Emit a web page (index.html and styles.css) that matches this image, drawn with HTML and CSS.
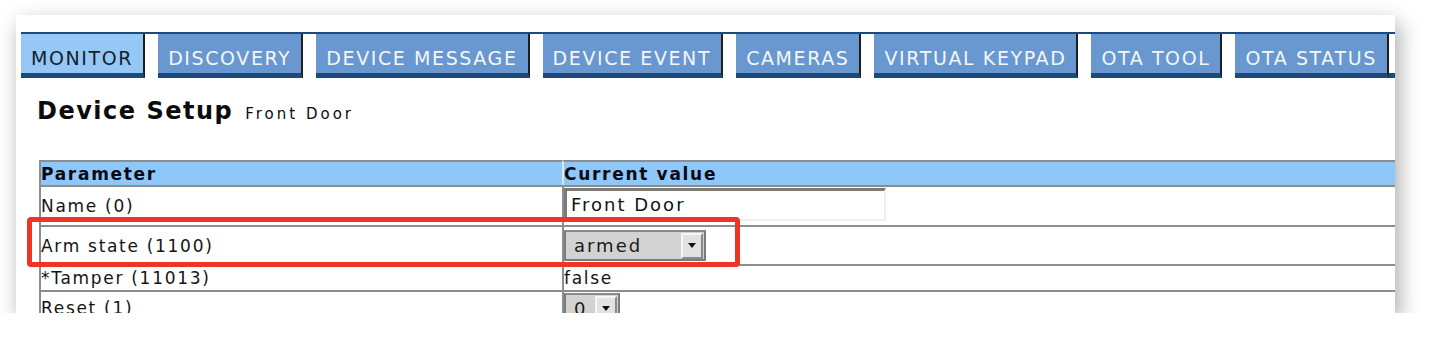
FILE: index.html
```html
<!DOCTYPE html>
<html>
<head>
<meta charset="utf-8">
<title>Device Setup</title>
<link rel="stylesheet" href="styles.css">
</head>
<body>
<div class="card">
  <div class="tabs">
    <div class="tab active">MONITOR</div>
    <div class="tab">DISCOVERY</div>
    <div class="tab">DEVICE MESSAGE</div>
    <div class="tab">DEVICE EVENT</div>
    <div class="tab">CAMERAS</div>
    <div class="tab">VIRTUAL KEYPAD</div>
    <div class="tab">OTA TOOL</div>
    <div class="tab">OTA STATUS</div>
    <div class="tab-fill"></div>
  </div>
  <h1 class="title">Device Setup<span class="sub">Front Door</span></h1>
  <table class="params">
    <colgroup><col class="c1"><col class="c2"></colgroup>
    <tr class="head">
      <th>Parameter</th>
      <th class="second">Current value</th>
    </tr>
    <tr class="r-name">
      <td>Name (0)</td>
      <td class="top"><span class="textbox">Front Door</span></td>
    </tr>
    <tr class="r-arm">
      <td>Arm state (1100)</td>
      <td><span class="select wide"><span class="sel-text">armed</span><span class="sel-btn"><span class="tri"></span></span></span></td>
    </tr>
    <tr class="r-small">
      <td>*Tamper (11013)</td>
      <td>false</td>
    </tr>
    <tr class="r-small">
      <td>Reset (1)</td>
      <td class="top"><span class="select narrow"><span class="sel-text">0</span><span class="sel-btn"><span class="tri"></span></span></span></td>
    </tr>
  </table>
  <div class="highlight"></div>
</div>
</body>
</html>
```

FILE: styles.css
```css
html, body {
  margin: 0;
  padding: 0;
  background: #ffffff;
}

body {
  font-family: "DejaVu Sans", Verdana, sans-serif;
  color: #111111;
}

.card {
  position: relative;
  box-sizing: border-box;
  width: 1379px;
  height: 298px;
  margin: 15px 0 0 16px;
  padding: 17px 0 0 5px;
  background: #ffffff;
  overflow: hidden;
  box-shadow: 4px 8px 20px rgba(0, 0, 0, 0.34);
}

/* Tabs */
.tabs {
  display: flex;
  gap: 13px;
  border-top: 2px solid #1b4b7e;
}

.tab {
  flex: none;
  box-sizing: border-box;
  height: 44px;
  padding: 13px 10px 0 10px;
  border-right: 2px solid #1e1e1e;
  border-bottom: 5px solid #1b4a7e;
  background: #6898cf;
  color: #f4f6f8;
  font-size: 19px;
  line-height: 22px;
  letter-spacing: 1.6px;
  white-space: nowrap;
}

.tab.active {
  background: #95c8f5;
  color: #15202c;
}

.tab-fill {
  flex: 1;
  margin-left: -13px;
  height: 44px;
  box-sizing: border-box;
  border-bottom: 5px solid #1b4a7e;
}

/* Title */
.title {
  margin: 19px 0 0 16px;
  font-size: 24px;
  font-weight: bold;
  line-height: 28px;
  letter-spacing: 1.5px;
  color: #0c0c0c;
}

.sub {
  margin-left: 12px;
  font-size: 15px;
  font-weight: normal;
  letter-spacing: 3px;
}

/* Table */
.params {
  margin: 32px 0 0 18px;
  width: 1400px;
  table-layout: fixed;
  border-collapse: separate;
  border-spacing: 0;
  font-size: 17px;
  letter-spacing: 1.7px;
}

.params col.c1 {
  width: 523px;
}

.params th,
.params td {
  box-sizing: border-box;
  padding: 0;
  border-top: 2px solid #8d8d8d;
  border-left: 2px solid #8d8d8d;
  text-align: left;
  vertical-align: middle;
  white-space: nowrap;
  color: #141414;
}

.params th {
  background: #8ec7f8;
  font-weight: bold;
  height: 25px;
  color: #0a0a14;
}

.params th.second {
  border-left-color: #dfe6ec;
}

.r-name td {
  height: 40px;
}

.r-arm td {
  height: 39px;
}

.r-small td {
  height: 26px;
}

.params td.top {
  vertical-align: top;
  padding-top: 1px;
}

/* Controls */
.textbox {
  display: inline-block;
  box-sizing: border-box;
  width: 322px;
  height: 33px;
  padding: 2px 0 0 4px;
  border-top: 3px solid #7a7a7a;
  border-left: 3px solid #7a7a7a;
  border-right: 2px solid #efefef;
  border-bottom: 2px solid #efefef;
  background: #ffffff;
  font-size: 18px;
  line-height: 24px;
  letter-spacing: 2px;
  vertical-align: top;
}

.select {
  display: inline-flex;
  align-items: center;
  box-sizing: border-box;
  height: 31px;
  border: 2px solid #7b7b7b;
  border-top-color: #8a8a8a;
  background: #d2d2d2;
  vertical-align: middle;
}

.select.wide {
  width: 142px;
}

.select.narrow {
  width: 56px;
}

.sel-text {
  padding-left: 8px;
  font-size: 18px;
  letter-spacing: 2px;
  color: #1a1a1a;
}

.sel-btn {
  display: flex;
  align-items: center;
  justify-content: center;
  box-sizing: border-box;
  width: 22px;
  height: 26px;
  margin-left: auto;
  margin-right: 1px;
  background: #e2e2e2;
  border-top: 2px solid #f6f6f6;
  border-left: 2px solid #f6f6f6;
  border-right: 2px solid #8a8a8a;
  border-bottom: 2px solid #8a8a8a;
}

.tri {
  width: 0;
  height: 0;
  border-left: 4px solid transparent;
  border-right: 4px solid transparent;
  border-top: 5px solid #111111;
}

/* Annotation overlay */
.highlight {
  position: absolute;
  left: 11px;
  top: 202px;
  width: 713px;
  height: 50px;
  box-sizing: border-box;
  border: 5px solid #ee3422;
  border-radius: 4px;
  pointer-events: none;
}
```
